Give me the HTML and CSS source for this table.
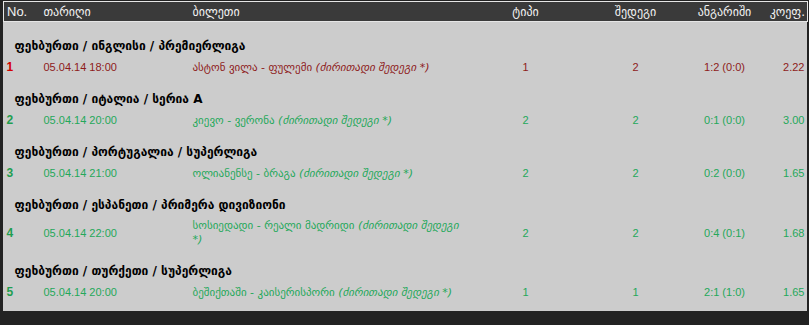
FILE: index.html
```html
<!DOCTYPE html>
<html lang="ka">
<head>
<meta charset="utf-8">
<title>ბილეთი</title>
<link rel="stylesheet" href="styles.css">
</head>
<body>
<div class="panel">
  <table class="bets">
    <colgroup>
      <col class="c-no"><col class="c-date"><col class="c-match"><col class="c-type"><col class="c-res"><col class="c-score"><col class="c-coef">
    </colgroup>
    <thead>
      <tr class="head">
        <th class="l">No.</th>
        <th class="l">თარიღი</th>
        <th class="l">ბილეთი</th>
        <th>ტიპი</th>
        <th>შედეგი</th>
        <th>ანგარიში</th>
        <th class="r">კოეფ.</th>
      </tr>
    </thead>
    <tbody>
      <tr class="group"><td colspan="7">ფეხბურთი / ინგლისი / პრემიერლიგა</td></tr>
      <tr class="row lost">
        <td class="num">1</td><td>05.04.14 18:00</td>
        <td class="match">ასტონ ვილა - ფულემი <i>(ძირითადი შედეგი *)</i></td>
        <td class="c">1</td><td class="c">2</td><td class="c">1:2 (0:0)</td><td class="r">2.22</td>
      </tr>
      <tr class="group"><td colspan="7">ფეხბურთი / იტალია / სერია A</td></tr>
      <tr class="row won">
        <td class="num">2</td><td>05.04.14 20:00</td>
        <td class="match">კიევო - ვერონა <i>(ძირითადი შედეგი *)</i></td>
        <td class="c">2</td><td class="c">2</td><td class="c">0:1 (0:0)</td><td class="r">3.00</td>
      </tr>
      <tr class="group"><td colspan="7">ფეხბურთი / პორტუგალია / სუპერლიგა</td></tr>
      <tr class="row won">
        <td class="num">3</td><td>05.04.14 21:00</td>
        <td class="match">ოლიანენსე - ბრაგა <i>(ძირითადი შედეგი *)</i></td>
        <td class="c">2</td><td class="c">2</td><td class="c">0:2 (0:0)</td><td class="r">1.65</td>
      </tr>
      <tr class="group"><td colspan="7">ფეხბურთი / ესპანეთი / პრიმერა დივიზიონი</td></tr>
      <tr class="row won">
        <td class="num">4</td><td>05.04.14 22:00</td>
        <td class="match">სოსიედადი - რეალი მადრიდი <i>(ძირითადი შედეგი</i> <i>*)</i></td>
        <td class="c">2</td><td class="c">2</td><td class="c">0:4 (0:1)</td><td class="r">1.68</td>
      </tr>
      <tr class="group"><td colspan="7">ფეხბურთი / თურქეთი / სუპერლიგა</td></tr>
      <tr class="row won">
        <td class="num">5</td><td>05.04.14 20:00</td>
        <td class="match">ბეშიქთაში - კაისერისპორი <i>(ძირითადი შედეგი *)</i></td>
        <td class="c">1</td><td class="c">1</td><td class="c">2:1 (1:0)</td><td class="r">1.65</td>
      </tr>
    </tbody>
  </table>
</div>
</body>
</html>
```

FILE: styles.css
```css
html, body {
  margin: 0;
  padding: 0;
  background: #222222;
  height: 325px;
  overflow: hidden;
}
body {
  font-family: "Liberation Sans", "DejaVu Sans", Arial, sans-serif;
  font-size: 11px;
}
.panel {
  margin: 1px 2px 0 3px;
  width: 804px;
  background: #cccccc;
  padding-bottom: 11px;
}
.bets {
  width: 804px;
  border-collapse: collapse;
  table-layout: fixed;
}
.c-no { width: 37px; }
.c-date { width: 149px; }
.c-match { width: 285px; }
.c-type { width: 102px; }
.c-res { width: 118px; }
.c-score { width: 60px; }
.c-coef { width: 53px; }

.head {
  background: #3a3a3a;
  color: #f2f2f2;
  border: 1px solid #e6e6e6;
}
.head th {
  height: 19px;
  padding: 0 3px;
  font-weight: normal;
  font-size: 12px;
  font-family: "DejaVu Sans", "Liberation Sans", sans-serif;
  text-align: center;
}
.head th:first-child {
  font-family: "Liberation Sans", sans-serif;
  font-size: 13px;
}
.head th.l { text-align: left; }
.head th.r { text-align: right; padding-right: 2px; }

.group td {
  padding: 16px 0 0 11px;
  line-height: 16px;
  font-family: "DejaVu Sans", sans-serif;
  font-weight: bold;
  font-size: 12px;
  color: #000000;
}
.row td {
  padding: 7px 3px 1px 3px;
  line-height: 13px;
  vertical-align: middle;
}
.row td.num { font-weight: bold; font-size: 12px; }
.row td.c { text-align: center; }
.row td.r { text-align: right; padding-right: 3px; }
.row td.match {
  font-family: "DejaVu Sans", sans-serif;
  font-size: 11px;
  line-height: 14px;
  padding: 6px 10px 0 3px;
}
.row td.match i { font-style: italic; }

.lost td { color: #8e1b1b; }
.lost td.num { color: #d40000; }
.won td { color: #24a85a; }
.won td.num { color: #1f9e50; }
```
